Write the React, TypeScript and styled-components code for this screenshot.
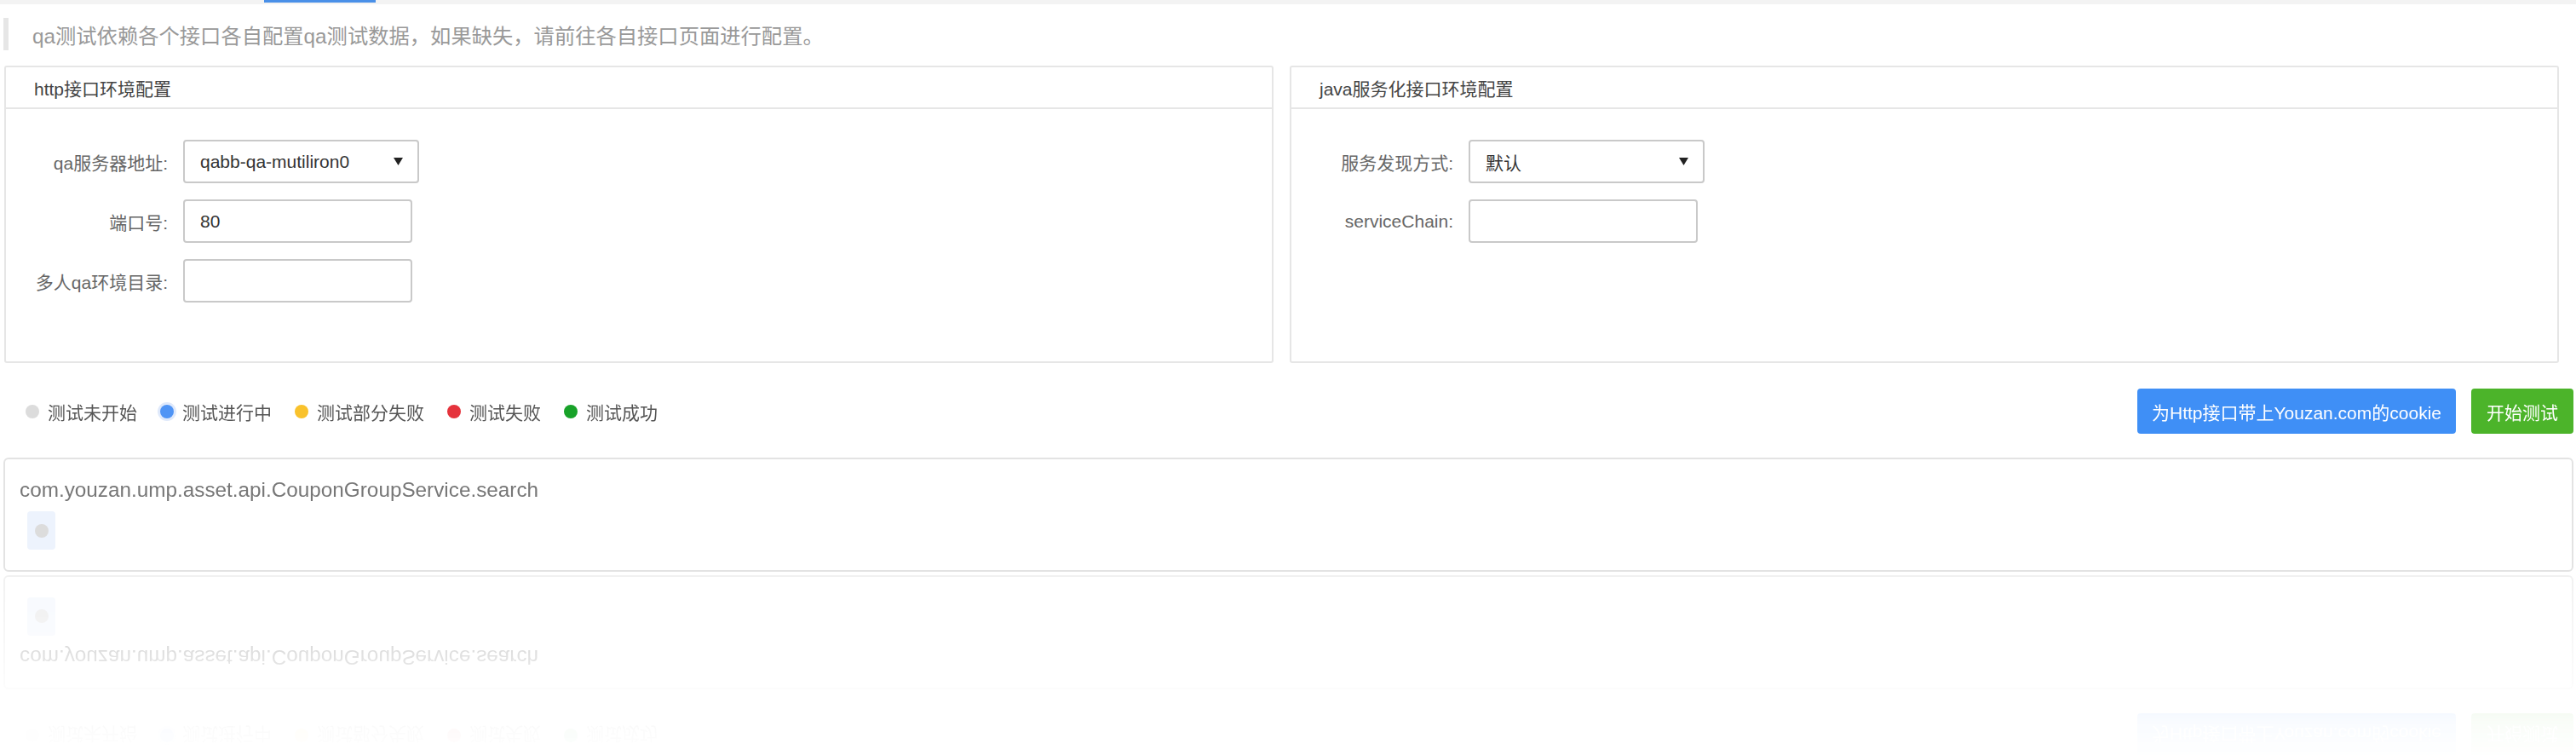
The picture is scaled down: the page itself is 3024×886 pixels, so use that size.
import React from "react";
import styled, { createGlobalStyle } from "styled-components";

const GlobalStyle = createGlobalStyle`
  html, body { margin: 0; padding: 0; background: #fff; }
  body {
    font-family: "Liberation Sans", "Noto Sans CJK SC", sans-serif;
    -webkit-font-smoothing: antialiased;
  }
  * { box-sizing: border-box; }
`;

const Page = styled.div`
  width: 3024px;
  height: 886px;
  overflow: hidden;
  background: #fff;
`;

const TopStrip = styled.div`
  height: 5px;
  background: #f3f3f3;
  display: flex;
  padding-left: 310px;
`;

const TopTab = styled.div`
  width: 131px;
  height: 3px;
  background: #4a90e8;
`;

const Notice = styled.div`
  margin: 16px 0 0 4px;
  height: 38px;
  border-left: 6px solid #e6e6e6;
  padding-left: 28px;
  display: flex;
  align-items: center;
  font-size: 24.3px;
  color: #999;
`;

const Panels = styled.div`
  display: grid;
  grid-template-columns: 1fr 1fr;
  gap: 19px;
  margin: 18px 20px 0 5px;
`;

const Panel = styled.section`
  border: 2px solid #e6e6e6;
  border-radius: 3px;
  display: flex;
  flex-direction: column;
`;

const PanelHeader = styled.header`
  height: 49px;
  border-bottom: 2px solid #e6e6e6;
  display: flex;
  align-items: center;
  padding-left: 33px;
  font-size: 21px;
  color: #444;
`;

const PanelBody = styled.div`
  padding: 36px 0 69px;
  display: flex;
  flex-direction: column;
  gap: 19px;
`;

const FormRow = styled.div`
  display: flex;
  align-items: center;
  gap: 18px;
`;

const Label = styled.label`
  width: 190px;
  text-align: right;
  font-size: 21px;
  color: #666;
`;

const SelectBox = styled.div`
  width: 277px;
  height: 51px;
  border: 2px solid #c9c9c9;
  border-radius: 4px;
  padding: 0 17px 0 18px;
  display: flex;
  align-items: center;
  justify-content: space-between;
  font-size: 21px;
  color: #333;
  background: #fff;
`;

const TextInput = styled.input`
  width: 269px;
  height: 51px;
  border: 2px solid #c9c9c9;
  border-radius: 4px;
  padding: 0 18px;
  font-family: inherit;
  font-size: 21px;
  color: #333;
  background: #fff;
  outline: none;
`;

const Bottom = styled.div`
  margin: 30px 3px 0 4px;
  -webkit-box-reflect: below 4px
    linear-gradient(
      to bottom,
      transparent 0%,
      rgba(0, 0, 0, 0.03) 20%,
      rgba(0, 0, 0, 0.12) 40%,
      rgba(0, 0, 0, 0.5) 100%
    );
`;

const Toolbar = styled.div`
  height: 53px;
  display: flex;
  align-items: center;
  justify-content: space-between;
`;

const Legend = styled.div`
  display: flex;
  align-items: center;
  gap: 27px;
  padding-left: 26px;
`;

const LegendItem = styled.div`
  display: flex;
  align-items: center;
  gap: 10px;
  font-size: 21px;
  color: #555;
`;

const Dot = styled.span<{ $color: string; $halo?: boolean }>`
  width: 16px;
  height: 16px;
  border-radius: 50%;
  background: ${(p) => p.$color};
  box-shadow: ${(p) => (p.$halo ? "0 0 0 3px #dfe9fb" : "none")};
  flex: none;
`;

const Actions = styled.div`
  display: flex;
  gap: 18px;
`;

const Button = styled.button<{ $color: string; $pad: number }>`
  height: 53px;
  padding: 0 ${(p) => p.$pad}px;
  border: none;
  border-radius: 4px;
  background: ${(p) => p.$color};
  color: #fff;
  font-family: inherit;
  font-size: 21px;
  cursor: pointer;
`;

const Card = styled.div`
  margin-top: 28px;
  border: 2px solid #e3e3e3;
  border-radius: 6px;
  padding: 18px 17px 24px;
  background: #fff;
`;

const CardTitle = styled.div`
  line-height: 36px;
  font-size: 24.3px;
  color: #777;
`;

const Chip = styled.div`
  margin: 7px 0 0 9px;
  width: 33px;
  height: 45px;
  border-radius: 4px;
  background: #edf3fd;
  display: flex;
  align-items: center;
  justify-content: center;
`;

const Arrow = () => (
  <svg width="11" height="9" viewBox="0 0 11 9">
    <path d="M0 0 H11 L5.5 9 Z" fill="#222" />
  </svg>
);

const legend = [
  { text: "测试未开始", color: "#dcdcdc" },
  { text: "测试进行中", color: "#4f94f5", halo: true },
  { text: "测试部分失败", color: "#f9c22c" },
  { text: "测试失败", color: "#e5333c" },
  { text: "测试成功", color: "#18a229" },
];

export default function App() {
  return (
    <Page>
      <GlobalStyle />
      <TopStrip>
        <TopTab />
      </TopStrip>
      <Notice>qa测试依赖各个接口各自配置qa测试数据，如果缺失，请前往各自接口页面进行配置。</Notice>
      <Panels>
        <Panel>
          <PanelHeader>http接口环境配置</PanelHeader>
          <PanelBody>
            <FormRow>
              <Label>qa服务器地址:</Label>
              <SelectBox>
                <span>qabb-qa-mutiliron0</span>
                <Arrow />
              </SelectBox>
            </FormRow>
            <FormRow>
              <Label>端口号:</Label>
              <TextInput defaultValue="80" />
            </FormRow>
            <FormRow>
              <Label>多人qa环境目录:</Label>
              <TextInput defaultValue="" />
            </FormRow>
          </PanelBody>
        </Panel>
        <Panel>
          <PanelHeader>java服务化接口环境配置</PanelHeader>
          <PanelBody>
            <FormRow>
              <Label>服务发现方式:</Label>
              <SelectBox>
                <span>默认</span>
                <Arrow />
              </SelectBox>
            </FormRow>
            <FormRow>
              <Label>serviceChain:</Label>
              <TextInput defaultValue="" />
            </FormRow>
          </PanelBody>
        </Panel>
      </Panels>
      <Bottom>
        <Toolbar>
          <Legend>
            {legend.map((l) => (
              <LegendItem key={l.text}>
                <Dot $color={l.color} $halo={l.halo} />
                {l.text}
              </LegendItem>
            ))}
          </Legend>
          <Actions>
            <Button $color="#3f8ff6" $pad={17}>为Http接口带上Youzan.com的cookie</Button>
            <Button $color="#4cb42a" $pad={18}>开始测试</Button>
          </Actions>
        </Toolbar>
        <Card>
          <CardTitle>com.youzan.ump.asset.api.CouponGroupService.search</CardTitle>
          <Chip>
            <Dot $color="#dcdcdc" />
          </Chip>
        </Card>
      </Bottom>
    </Page>
  );
}
